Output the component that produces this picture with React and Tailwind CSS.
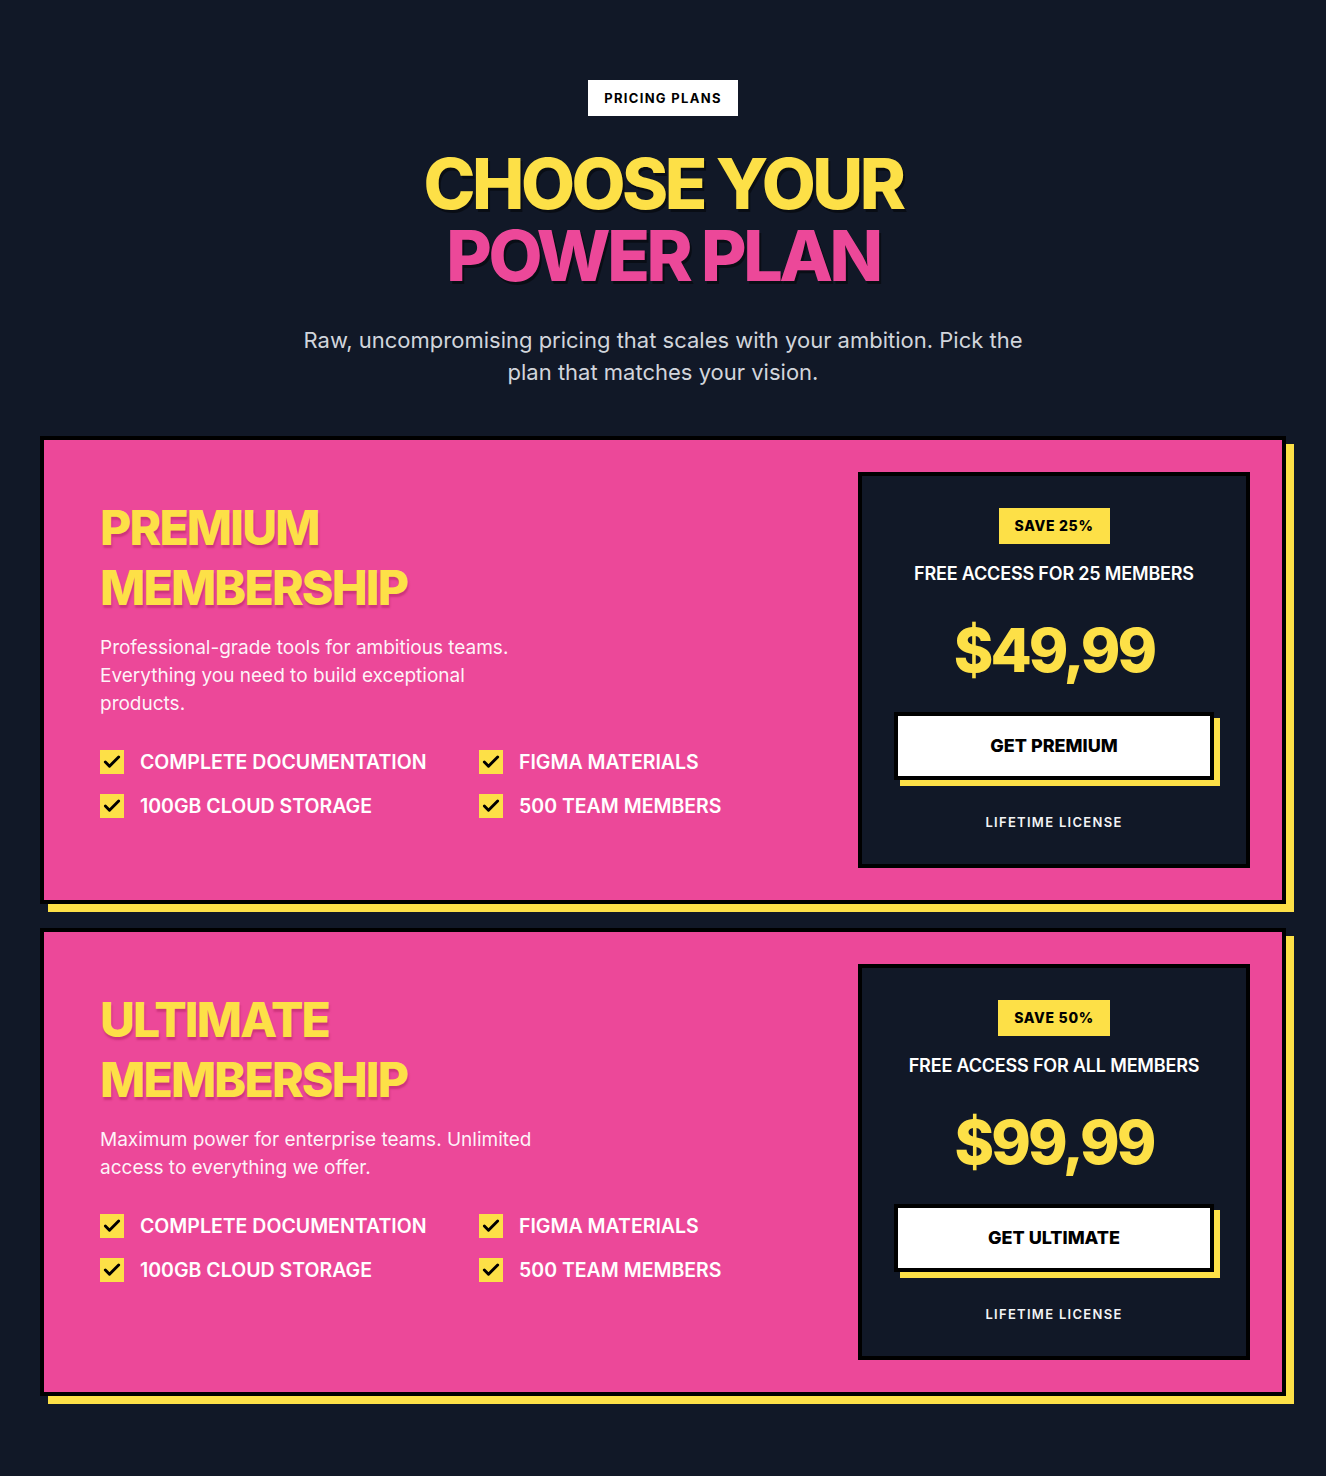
import { Check } from 'lucide-react';

const plans = [
  {
    name: ['PREMIUM', 'MEMBERSHIP'],
    description:
      'Professional-grade tools for ambitious teams. Everything you need to build exceptional products.',
    save: 'SAVE 25%',
    access: 'FREE ACCESS FOR 25 MEMBERS',
    price: '$49,99',
    cta: 'GET PREMIUM',
  },
  {
    name: ['ULTIMATE', 'MEMBERSHIP'],
    description:
      'Maximum power for enterprise teams. Unlimited access to everything we offer.',
    save: 'SAVE 50%',
    access: 'FREE ACCESS FOR ALL MEMBERS',
    price: '$99,99',
    cta: 'GET ULTIMATE',
  },
];

const features = [
  'COMPLETE DOCUMENTATION',
  'FIGMA MATERIALS',
  '100GB CLOUD STORAGE',
  '500 TEAM MEMBERS',
];

function PlanCard({ plan }) {
  return (
    <div className="flex border-4 border-black bg-[#ec4899] p-8 shadow-[8px_8px_0_0_#fde047]">
      <div className="flex-1 px-6 pt-[26px]">
        <h2 className="text-5xl font-extrabold leading-[60px] tracking-[-0.038em] text-[#fde047] [text-shadow:1px_3px_2px_rgba(157,23,77,0.4)]">
          {plan.name[0]}
          <br />
          {plan.name[1]}
        </h2>
        <p className="mt-4 max-w-md text-[19px] leading-7 text-white/95">{plan.description}</p>
        <ul className="mt-8 grid max-w-[740px] grid-cols-2 gap-x-6 gap-y-5">
          {features.map((f) => (
            <li key={f} className="flex items-center gap-4">
              <span className="flex h-6 w-6 shrink-0 items-center justify-center bg-[#fde047]">
                <Check className="h-5 w-5 text-black" strokeWidth={3.5} />
              </span>
              <span className="text-[19.5px] font-semibold leading-6 text-white">{f}</span>
            </li>
          ))}
        </ul>
      </div>
      <div className="flex w-[392px] shrink-0 flex-col items-center border-4 border-black bg-[#111827] p-8 text-center">
        <span className="bg-[#fde047] px-4 py-2 text-sm font-extrabold leading-5 tracking-wider text-black">
          {plan.save}
        </span>
        <p className="mt-4 text-lg font-semibold leading-7 tracking-[-0.01em] text-white">{plan.access}</p>
        <p className="mt-8 text-6xl font-extrabold leading-[60px] tracking-tighter text-[#fde047]">
          {plan.price}
        </p>
        <button className="mt-8 w-full border-4 border-black bg-white py-4 text-lg font-extrabold leading-7 text-black shadow-[6px_6px_0_0_#fde047]">
          {plan.cta}
        </button>
        <p className="mt-8 text-[13px] font-semibold leading-5 tracking-widest text-gray-100">
          LIFETIME LICENSE
        </p>
      </div>
    </div>
  );
}

export default function App() {
  return (
    <div className="min-h-screen bg-[#111827] px-10 pt-20 pb-20 font-['Inter',sans-serif]">
      <div className="flex flex-col items-center text-center">
        <span className="bg-white px-4 py-2 text-[13px] font-bold leading-5 tracking-widest text-black">
          PRICING PLANS
        </span>
        <h1 className="mt-8 text-[70px] font-extrabold leading-[72px] tracking-tighter [text-shadow:2px_3px_0_rgba(0,0,0,0.45)]">
          <span className="text-[#fde047]">CHOOSE YOUR</span>
          <br />
          <span className="text-[#ec4899]">POWER PLAN</span>
        </h1>
        <p className="mt-8 max-w-3xl text-[22px] leading-8 text-gray-300">
          Raw, uncompromising pricing that scales with your ambition. Pick the plan that matches your vision.
        </p>
      </div>
      <div className="mt-12 flex flex-col gap-6">
        {plans.map((p) => (
          <PlanCard key={p.price} plan={p} />
        ))}
      </div>
    </div>
  );
}
